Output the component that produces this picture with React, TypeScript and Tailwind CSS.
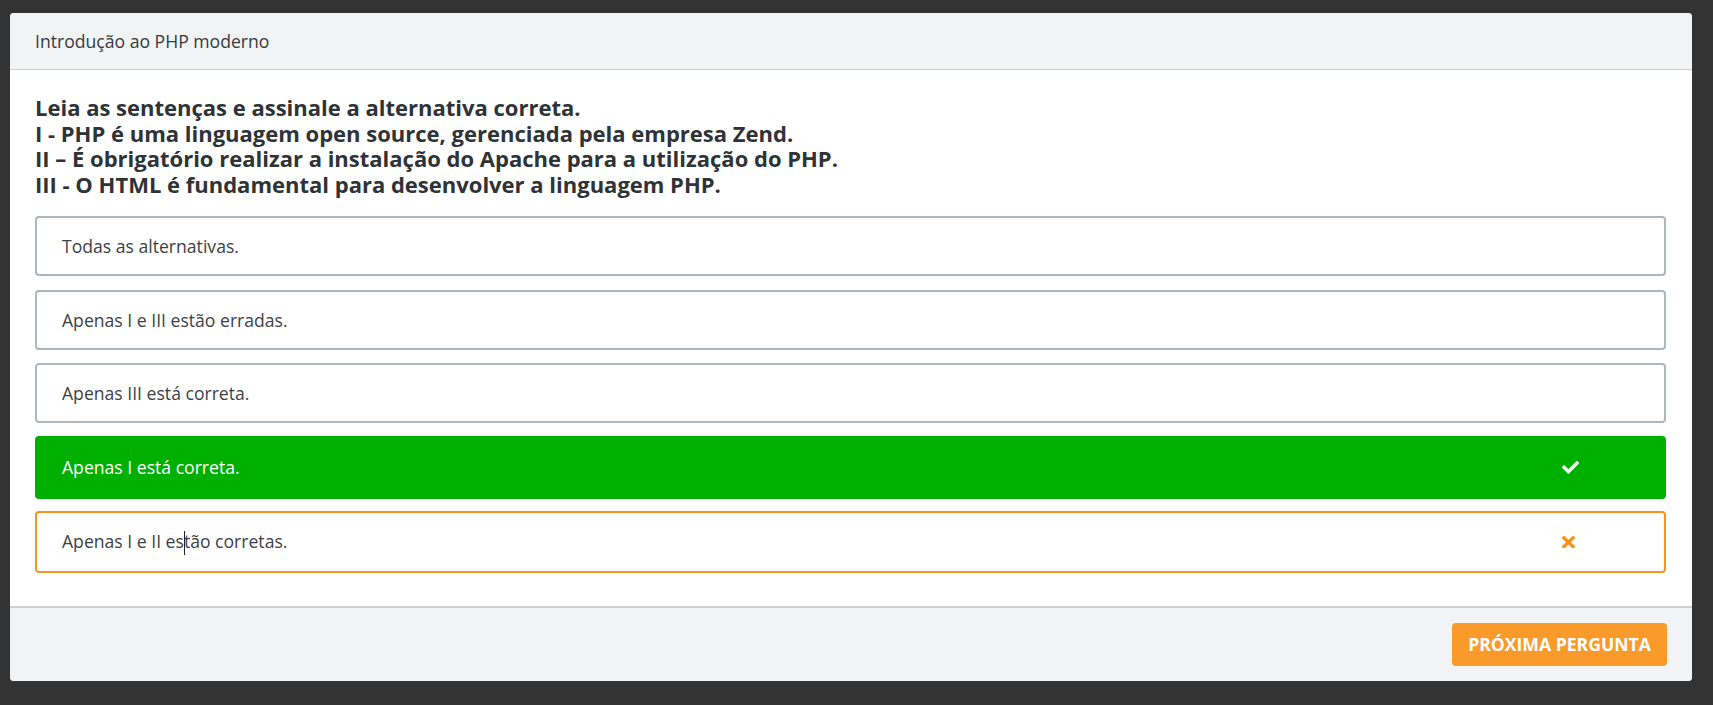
import React from "react";

const font = { fontFamily: '"Open Sans", "Noto Sans", sans-serif' };

function CheckIcon() {
  return (
    <svg width="17" height="12.7" viewBox="0 65 512 382" fill="#ffffff">
      <path d="M173.898 439.404l-166.4-166.4c-9.997-9.997-9.997-26.206 0-36.204l36.203-36.204c9.997-9.998 26.207-9.998 36.204 0L192 312.69 432.095 72.596c9.997-9.997 26.207-9.997 36.204 0l36.203 36.204c9.997 9.997 9.997 26.206 0 36.204l-294.4 294.401c-9.998 9.997-26.207 9.997-36.204-.001z" />
    </svg>
  );
}

function TimesIcon() {
  return (
    <svg width="13" height="12.5" viewBox="0 80 352 352" preserveAspectRatio="none" fill="#f7941d">
      <path d="M242.72 256l100.07-100.07c12.28-12.28 12.28-32.19 0-44.48l-22.24-22.24c-12.28-12.28-32.19-12.28-44.48 0L176 189.28 75.930 89.21c-12.28-12.28-32.19-12.28-44.48 0L9.21 111.45c-12.28 12.28-12.28 32.19 0 44.48L109.28 256 9.21 356.07c-12.28 12.28-12.28 32.19 0 44.48l22.24 22.24c12.28 12.28 32.2 12.28 44.48 0L176 322.72l100.07 100.07c12.28 12.28 32.2 12.28 44.48 0l22.24-22.24c12.28-12.28 12.28-32.19 0-44.48L242.72 256z" />
    </svg>
  );
}

export default function App() {
  return (
    <div className="min-h-screen bg-[#333333] pt-[13px] pl-[10px] pr-[21px] pb-[24px]" style={font}>
      <div className="rounded-[4px] bg-white overflow-hidden">
        <div className="h-[57px] bg-[#f2f3f5] border-b border-[#cdd1d6] px-[25px] flex items-center text-[17.6px] text-[#343a40]">
          Introdução ao PHP moderno
        </div>
        <div className="pt-[25px] pl-[25px] pr-[26px] pb-[33px]">
          <div className="font-bold text-[22px] leading-[25.7px] text-[#2e3338]">
            <div>Leia as sentenças e assinale a alternativa correta.</div>
            <div>I - PHP é uma linguagem open source, gerenciada pela empresa Zend.</div>
            <div>II – É obrigatório realizar a instalação do Apache para a utilização do PHP.</div>
            <div>III - O HTML é fundamental para desenvolver a linguagem PHP.</div>
          </div>
          <div className="mt-[18px] flex flex-col">
            <div className="h-[60px] border-2 border-[#aeb5bd] rounded-[4px] flex items-center pl-[25px] text-[17.6px] text-[#3d4146]">
              Todas as alternativas.
            </div>
            <div className="mt-[14px] h-[60px] border-2 border-[#aeb5bd] rounded-[4px] flex items-center pl-[25px] text-[17.6px] text-[#3d4146]">
              Apenas I e III estão erradas.
            </div>
            <div className="mt-[13px] h-[60px] border-2 border-[#aeb5bd] rounded-[4px] flex items-center pl-[25px] text-[17.6px] text-[#3d4146]">
              Apenas III está correta.
            </div>
            <div className="mt-[13px] h-[63px] bg-[#00b000] rounded-[4px] flex items-center justify-between pl-[27px] pr-[87px] text-[17.6px] text-white">
              <span>Apenas I está correta.</span>
              <span className="w-[17px] flex items-center">
                <CheckIcon />
              </span>
            </div>
            <div className="mt-[12px] h-[62px] border-2 border-[#f7941d] rounded-[4px] flex items-center justify-between pl-[25px] pr-[85px] text-[17.6px] text-[#3d4146]">
              <span>
                Apenas I e II es
                <span className="inline-block w-px h-[24px] bg-[#222] align-middle -mr-px"></span>
                tão corretas.
              </span>
              <span className="w-[17px] flex items-center">
                <TimesIcon />
              </span>
            </div>
          </div>
        </div>
        <div className="border-t-2 border-[#cdd0d4] bg-[#f2f3f5] flex justify-end pt-[15px] pb-[15px] pr-[25px]">
          <button className="w-[215px] h-[43px] bg-[#f99a2b] rounded-[4px] text-white font-bold text-[17.6px] tracking-normal">
            PRÓXIMA PERGUNTA
          </button>
        </div>
      </div>
    </div>
  );
}
